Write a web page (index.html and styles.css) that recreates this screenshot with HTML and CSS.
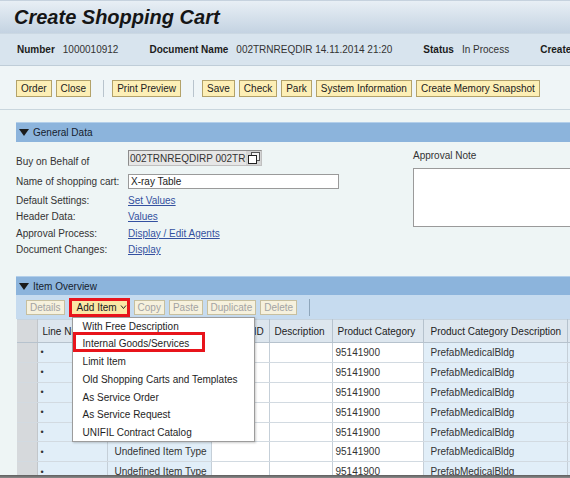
FILE: index.html
```html
<!DOCTYPE html>
<html lang="en">
<head>
    <meta charset="UTF-8">
    <meta name="viewport" content="width=device-width, initial-scale=1.0">
    <title>Create Shopping Cart</title>
    <link rel="stylesheet" href="styles.css">
</head>
<body>
    <div class="page">
        <!-- title -->
        <div class="title-bar">
            <h1>Create Shopping Cart</h1>
        </div>

        <!-- document header info -->
        <div class="doc-info">
            <span class="info"><b>Number</b>1000010912</span>
            <span class="info"><b>Document Name</b>002TRNREQDIR 14.11.2014 21:20</span>
            <span class="info"><b>Status</b>In Process</span>
            <span class="info"><b>Created On</b>14.11.2014</span>
        </div>

        <!-- main toolbar -->
        <div class="toolbar">
            <button class="btn">Order</button>
            <button class="btn">Close</button>
            <span class="sep"></span>
            <button class="btn">Print Preview</button>
            <span class="sep"></span>
            <button class="btn">Save</button>
            <button class="btn">Check</button>
            <button class="btn">Park</button>
            <button class="btn">System Information</button>
            <button class="btn">Create Memory Snapshot</button>
        </div>

        <div class="content">
            <div class="section-bar"><span class="tri"></span>General Data</div>
            <div class="general">
                <div class="form">
                    <div class="field first">
                        <label>Buy on Behalf of</label>
                        <div class="ro-input">
                            <span>002TRNREQDIRP 002TRNREQDIRP</span>
                            <i class="help">
                                <svg width="12" height="12" viewBox="0 0 12 12">
                                    <rect x="3.5" y="0.5" width="8" height="8" fill="#f4f4f4" stroke="#555"/>
                                    <rect x="0.5" y="3.5" width="8" height="8" fill="#fff" stroke="#222"/>
                                </svg>
                            </i>
                        </div>
                    </div>
                    <div class="field name">
                        <label>Name of shopping cart:</label>
                        <input type="text" class="text-input" value="X-ray Table">
                    </div>
                    <div class="field links"><label>Default Settings:</label><a href="#">Set Values</a></div>
                    <div class="field"><label>Header Data:</label><a href="#">Values</a></div>
                    <div class="field"><label>Approval Process:</label><a href="#">Display / Edit Agents</a></div>
                    <div class="field"><label>Document Changes:</label><a href="#">Display</a></div>
                </div>
                <div class="note">
                    <label>Approval Note</label>
                    <textarea></textarea>
                </div>
            </div>

            <div class="section-bar items-bar"><span class="tri"></span>Item Overview</div>
            <div class="item-toolbar">
                <button class="ibtn">Details</button>
                <div class="add-wrap">
                    <button class="add-btn">Add Item
                        <svg width="7" height="6" viewBox="0 0 7 6"><path d="M1 1.5 L3.5 4.5 L6 1.5" fill="none" stroke="#222" stroke-width="1"/></svg>
                    </button>
                    <!-- dropdown -->
                    <div class="menu">
                        <div class="menu-item">With Free Description</div>
                        <div class="menu-item marked">Internal Goods/Services</div>
                        <div class="menu-item">Limit Item</div>
                        <div class="menu-item">Old Shopping Carts and Templates</div>
                        <div class="menu-item">As Service Order</div>
                        <div class="menu-item">As Service Request</div>
                        <div class="menu-item">UNIFIL Contract Catalog</div>
                    </div>
                </div>
                <button class="ibtn">Copy</button>
                <button class="ibtn">Paste</button>
                <button class="ibtn">Duplicate</button>
                <button class="ibtn">Delete</button>
                <span class="isep"></span>
            </div>

            <table class="items">
                <colgroup>
                    <col style="width:20px">
                    <col style="width:70px">
                    <col style="width:104px">
                    <col style="width:58px">
                    <col style="width:63px">
                    <col style="width:91px">
                    <col style="width:144px">
                    <col style="width:80px">
                </colgroup>
                <thead>
                    <tr>
                        <th class="sel"></th>
                        <th>Line Number</th>
                        <th>Item Type</th>
                        <th>Product ID</th>
                        <th>Description</th>
                        <th>Product Category</th>
                        <th class="pcd">Product Category Description</th>
                        <th>Quantity</th>
                    </tr>
                </thead>
                <tbody id="rows"></tbody>
            </table>
        </div>
    </div>
    <div class="edge"></div>

    <script>
        // 7 item rows, all the same
        const rows = document.getElementById('rows');
        let html = '';
        for (let i = 0; i < 7; i++) {
            html += `
                <tr>
                    <td class="sel"></td>
                    <td class="blue dot">&bull;</td>
                    <td class="blue type">Undefined Item Type</td>
                    <td></td>
                    <td></td>
                    <td class="cat">95141900</td>
                    <td class="blue desc">PrefabMedicalBldg</td>
                    <td class="blue"></td>
                </tr>`;
        }
        rows.innerHTML = html;
    </script>
</body>
</html>
```

FILE: styles.css
```css
body {
    margin: 0;
    overflow: hidden;
    font-family: "Liberation Sans", Arial, sans-serif;
    font-size: 10px;
    color: #2a2a2a;
    background: #eef5f5;
}

.page {
    width: 660px;
    height: 475px;
    overflow: hidden;
}

.title-bar {
    height: 32px;
    border-top: 1px solid #c6d2de;
    padding-left: 14px;
    background: linear-gradient(#e8eff5, #c4d3e2);
}

.title-bar h1 {
    margin: 0;
    font-size: 20px;
    font-weight: bold;
    font-style: italic;
    line-height: 32px;
    color: #151515;
    white-space: nowrap;
}

.doc-info {
    height: 31px;
    display: flex;
    align-items: center;
    padding-left: 17px;
    background: #d8e4ee;
    border-top: 1px solid #cbd8e3;
    border-bottom: 1px solid #bfcdd8;
    white-space: nowrap;
}

.info {
    margin-right: 31px;
    color: #333;
}

.info b {
    margin-right: 8px;
    color: #1c1c1c;
}

.toolbar {
    height: 44px;
    box-sizing: border-box;
    display: flex;
    align-items: center;
    padding: 2px 0 0 16px;
    background: #eff5f7;
    border-bottom: 1px solid #c9d6de;
}

.btn {
    height: 17px;
    padding: 0 4px;
    margin-right: 4px;
    font-family: inherit;
    font-size: 10px;
    line-height: 15px;
    color: #222;
    background: #fdefb6;
    border: 1px solid #b3a26a;
    border-radius: 0;
    white-space: nowrap;
}

.sep {
    width: 1px;
    height: 17px;
    margin: 0 8px 0 8px;
    background: #b9c4cd;
}

.content {
    padding: 12px 0 0 16px;
}

.section-bar {
    height: 19px;
    display: flex;
    align-items: center;
    padding-left: 3px;
    background: #8cb4dc;
    border-top: 1px solid #b3cfea;
    color: #14212e;
}

.tri {
    width: 0;
    height: 0;
    border-left: 5px solid transparent;
    border-right: 5px solid transparent;
    border-top: 7px solid #1b1b1b;
    margin-right: 4px;
}

.items-bar {
    height: 18px;
}

.general {
    height: 134px;
    box-sizing: border-box;
    padding-top: 8px;
    display: flex;
}

.form {
    width: 397px;
}

.field {
    display: flex;
    align-items: center;
    height: 16.5px;
}

.field label {
    width: 112px;
    color: #333;
    white-space: nowrap;
}

.field.first {
    height: 16px;
    align-items: flex-start;
}

.field.first label {
    padding-top: 6px;
}

.field.name {
    height: 15px;
    margin-top: 8px;
}

.field.links {
    margin-top: 3px;
}

.ro-input {
    width: 134px;
    height: 16px;
    box-sizing: border-box;
    display: flex;
    align-items: center;
    border: 1px solid #8c8c8c;
    border-right-color: #c0c0c0;
    border-bottom-color: #c0c0c0;
    background: #e6e6e6;
    overflow: hidden;
}

.ro-input span {
    flex: 1;
    overflow: hidden;
    white-space: nowrap;
    padding-left: 1px;
    color: #333;
}

.help {
    width: 15px;
    height: 14px;
    display: flex;
    align-items: center;
    justify-content: center;
    background: #d4d4d4;
}

.text-input {
    width: 211px;
    height: 15px;
    box-sizing: border-box;
    margin: 0;
    padding: 0 2px;
    font-family: inherit;
    font-size: 10px;
    color: #222;
    border: 1px solid #9a9a9a;
    background: #fff;
}

.field a {
    color: #3451a0;
    text-decoration: underline;
}

.note {
    display: flex;
    flex-direction: column;
}

.note label {
    line-height: 12px;
    color: #333;
}

.note textarea {
    width: 200px;
    height: 59px;
    box-sizing: border-box;
    margin-top: 6px;
    border: 1px solid #9a9a9a;
    background: #fff;
    resize: none;
}

.item-toolbar {
    height: 24px;
    display: flex;
    align-items: center;
    padding-left: 10px;
    background: #c6dbef;
}

.ibtn {
    height: 15px;
    padding: 0 3px;
    margin-right: 4px;
    font-family: inherit;
    font-size: 10px;
    line-height: 13px;
    color: #a3a3a3;
    background: #f6f1dd;
    border: 1px solid #c7bf9f;
    border-radius: 0;
    white-space: nowrap;
}

.add-wrap {
    position: relative;
    margin-right: 4px;
}

.add-btn {
    display: flex;
    align-items: center;
    gap: 3px;
    width: 61px;
    height: 19px;
    box-sizing: border-box;
    padding: 0 0 0 5px;
    font-family: inherit;
    font-size: 10px;
    line-height: 13px;
    color: #1a1a1a;
    white-space: nowrap;
    background: #fbe8a6;
    border: 3px solid #e8141b;
    border-radius: 0;
}

.isep {
    width: 1px;
    height: 17px;
    margin-left: 8px;
    background: #8ea6bb;
}

.menu {
    position: absolute;
    top: 19px;
    left: 3px;
    width: 183px;
    height: 125px;
    box-sizing: border-box;
    background: #fff;
    border: 1px solid #9c9c9c;
    box-shadow: 1px 1px 2px rgba(0, 0, 0, 0.2);
    z-index: 2;
}

.menu-item {
    position: relative;
    height: 17.8px;
    line-height: 17.8px;
    padding-left: 10px;
    color: #1e1e1e;
    white-space: nowrap;
}

.menu-item.marked::after {
    content: "";
    position: absolute;
    left: 0;
    top: -3px;
    width: 132px;
    height: 20px;
    box-sizing: border-box;
    border: 3.5px solid #e8141b;
}

.items {
    margin-left: 1px;
    border-collapse: collapse;
    table-layout: fixed;
    width: 630px;
    background: #fff;
}

.items th {
    height: 22px;
    padding: 0 0 0 5px;
    text-align: left;
    font-weight: normal;
    color: #222;
    white-space: nowrap;
    overflow: hidden;
    background: #dde6ee;
    border-top: 1px solid #c6d3de;
    border-right: 1px solid #b6c2cd;
    border-bottom: 1px solid #b6c2cd;
}

.items th.pcd {
    padding-left: 7px;
}

.items td {
    height: 18.9px;
    padding: 0;
    white-space: nowrap;
    overflow: hidden;
    color: #333;
    border-right: 1px solid #c5cfd8;
    border-bottom: 1px solid #d2dae1;
}

.items .sel {
    background: #d6d9dc;
    border-right-color: #c2c6ca;
}

.items .blue {
    background: #e1eef8;
}

.items .dot {
    padding-left: 3px;
    font-size: 9px;
}

.items .type {
    padding-left: 7px;
}

.items .cat {
    padding-left: 3px;
}

.items .desc {
    padding-left: 7px;
}

.edge {
    height: 3px;
    background: linear-gradient(#5e5e5e, #8a8a8a);
}
```
